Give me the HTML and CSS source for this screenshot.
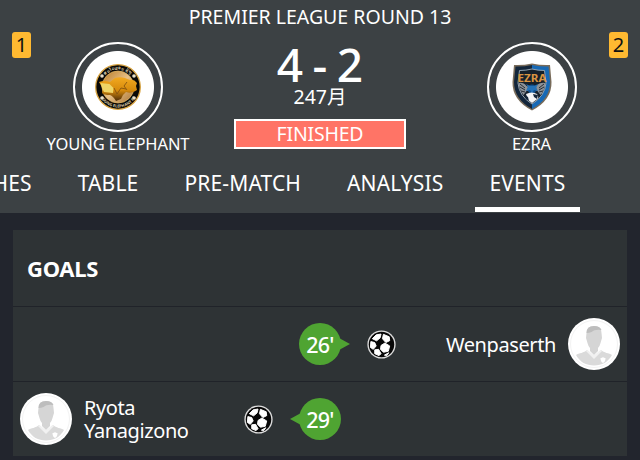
FILE: index.html
```html
<!DOCTYPE html>
<html lang="en">
<head>
    <meta charset="UTF-8">
    <meta name="viewport" content="width=device-width, initial-scale=1.0">
    <title>Young Elephant - Ezra</title>
    <link rel="stylesheet" href="styles.css">
</head>
<body>
    <svg width="0" height="0" class="defs">
        <symbol id="ball" viewBox="0 0 30 30">
            <circle cx="15" cy="15" r="14.6" fill="#dedede"/>
            <circle cx="15" cy="15" r="13.2" fill="#080808"/>
            <path d="M5.500 9l4-4 5-.8-1 4-3.500 3zM17 4.500l6 2.500.5 4-4 2-3.500-4zM4 12l4 1 1.500 3.500-3 3.500L3.500 18zM14.500 16l4-2.500 5 3-1.500 5.500-5 1-3-3zM8 20.500l4-.5 2.500 4.500-2 2-4.500-2zM18 26l4.500-2.500-2 3z" fill="#fff" stroke="#fff" stroke-width="1" stroke-linejoin="round"/>
        </symbol>
        <symbol id="person" viewBox="0 0 52 52">
            <circle cx="26" cy="26" r="26" fill="#fff"/>
            <circle cx="26" cy="26" r="23.500" fill="none" stroke="#f3f3f3"/>
            <path d="M8 37c3-2 8-2 11-5l7 6 7-6c3 3 8 3 11 5-4 7-10 10.500-18 10.500S12 44 8 37z" fill="#dadada"/>
            <path d="M18.500 15q0-7 7.500-7t7.500 7l.5 5-1.500 5q-1 4-2.500 5v3l-4 4-4-4v-3q-1.500-1-2.500-5L18 20z" fill="#d5d5d5"/>
            <path d="M18.500 15q0-7 7.500-7 6 0 7.500 4-7-1-10 2-2 1-5 1z" fill="#bdbdbd"/>
            <path d="M19.500 32l6.500 5.500 6.500-5.500 1.500 1-8 8-8-8z" fill="#f1f1f1"/>
            <path d="M32.500 40q2 0 2.500-1 .5 1 2.500 1 0 4-2.500 5-2.500-1-2.500-5z" fill="#fff"/>
        </symbol>
    </svg>

    <header class="match">
        <div class="league">PREMIER LEAGUE ROUND 13</div>
        <div class="scoreboard">
            <span class="rank">1</span>
            <div class="team">
                <div class="crest">
                    <svg width="48" height="48" viewBox="0 0 48 48">
                        <defs>
                            <linearGradient id="gold" x1="0" y1="0" x2="1" y2="1">
                                <stop offset="0" stop-color="#b77924"/>
                                <stop offset=".5" stop-color="#e8c187"/>
                                <stop offset="1" stop-color="#a97334"/>
                            </linearGradient>
                            <linearGradient id="head" x1="0" y1="0" x2="0" y2="1">
                                <stop offset="0" stop-color="#f2a91f"/>
                                <stop offset=".55" stop-color="#d68a0c"/>
                                <stop offset="1" stop-color="#4d2d08"/>
                            </linearGradient>
                            <path id="arcTop" d="M6.500 24a17.500 17.500 0 0 1 35 0"/>
                            <path id="arcBottom" d="M3.500 24a20.500 20.500 0 0 0 41 0"/>
                        </defs>
                        <circle cx="24" cy="24" r="22.300" fill="#090806" stroke="#d9a441" stroke-width="1.300"/>
                        <circle cx="24" cy="24" r="16" fill="url(#gold)" stroke="#e3b865" stroke-width=".7"/>
                        <text class="crest-text"><textPath href="#arcTop" startOffset="50%">ສະໂມສອນ ຊ້າງ</textPath></text>
                        <text class="crest-text"><textPath href="#arcBottom" startOffset="50%">YOUNG ELEPHANT FC</textPath></text>
                        <path d="M5 19q6-2 11 0l5-4q5-1.500 10 0l5 2q4-1 7 3l-1 3 1 4q-5 4-11 2-3 2-5 7l-5 2q-3-5-6-6-6 0-8-2l1-4z" fill="url(#head)"/>
                        <path d="M6.500 20l9 1 4 4-.5 5-9-1-2-4z" fill="#efd566"/>
                        <path d="M20 25l3 6 4-6 5 1M33 19l-3 4 3 4" fill="none" stroke="#855310" stroke-width=".9"/>
                        <g fill="#e9dfc9"><circle cx="8" cy="13" r="1.800"/><circle cx="40" cy="13" r="1.800"/><circle cx="8" cy="35" r="1.800"/><circle cx="40" cy="35" r="1.800"/></g>
                    </svg>
                </div>
                <div class="team-name">YOUNG ELEPHANT</div>
            </div>
            <div class="result">
                <div class="score">4 - 2</div>
                <div class="date">247月</div>
                <div class="status">FINISHED</div>
            </div>
            <div class="team">
                <div class="crest">
                    <svg width="42" height="48" viewBox="0 0 42 48">
                        <path d="M21 .5q9 2 18 1.500l1.500 17q.5 18-19.500 28.500Q1 37 1.500 19L3 2q9 .5 18-1.500z" fill="#786b5a"/>
                        <path d="M21 2q8 1.700 16.500 1.500L39 19q0 17-18 27z" fill="#1769b5"/>
                        <path d="M21 2q-8 1.700-16.500 1.500L3 19q0 17 18 27z" fill="#13263b"/>
                        <path d="M21 6q6 1.500 12.500 1.500L35 20q-1 13-14 21Q8 33 7 20L8.500 7.500Q15 7.500 21 6z" fill="#16202b" stroke="#93a2af"/>
                        <path d="M7.500 20q5-1 8 3l5 2 5-2q3-4 9-3-1 8-5 12l-3-4-5-2-6 2-3 4q-4-5-5-12z" fill="#8d9298"/>
                        <path d="M9 21l5 4M9 24l5 3M10 28l4 1M33 21l-5 4M33 24l-5 3M32 28l-4 1" stroke="#272d34"/>
                        <circle cx="21" cy="26" r="4.500" fill="#12518e"/>
                        <path d="M15 21l4 2h4l4-2-2 4 2 3-4-1-2 3-2-3-4 1 2-4z" fill="#2472b8"/>
                        <path d="M15 31q6-3 11 0 3 4-1 6l-4 3-4-3-1-3z" fill="#f5f6f7"/>
                        <path d="M22 31l5 1-1 4-3-2zM14 32l3 2 1 4-3-2z" fill="#14263a"/>
                        <text x="21" y="18.500" class="crest-name" textLength="29" lengthAdjust="spacingAndGlyphs">EZRA</text>
                    </svg>
                </div>
                <div class="team-name">EZRA</div>
            </div>
            <span class="rank">2</span>
        </div>
        <nav class="tabs">
            <a class="tab">MATCHES</a>
            <a class="tab">TABLE</a>
            <a class="tab">PRE-MATCH</a>
            <a class="tab">ANALYSIS</a>
            <a class="tab active">EVENTS</a>
        </nav>
    </header>

    <main class="card">
        <h2>GOALS</h2>
        <div class="event">
            <div class="side"></div>
            <div class="minute right">26'</div>
            <div class="side away">
                <svg class="ball"><use href="#ball"/></svg>
                <span class="player">Wenpaserth</span>
                <svg class="avatar"><use href="#person"/></svg>
            </div>
        </div>
        <div class="event">
            <div class="side home">
                <svg class="avatar"><use href="#person"/></svg>
                <span class="player">Ryota<br>Yanagizono</span>
                <svg class="ball"><use href="#ball"/></svg>
            </div>
            <div class="minute left">29'</div>
            <div class="side"></div>
        </div>
    </main>
</body>
</html>
```
FILE: styles.css
```css
* {
    box-sizing: border-box;
}
body {
    margin: 0;
    height: 460px;
    overflow: hidden;
    background: #22252d;
    color: #fff;
    font-family: "Noto Sans", "Noto Sans CJK JP", sans-serif;
}
.defs {
    position: absolute;
}
.match {
    height: 213px;
    overflow: hidden;
    background: #3c4144;
}
.league {
    height: 32px;
    padding-top: 4px;
    text-align: center;
    font-size: 19.5px;
    line-height: 26px;
}
.scoreboard {
    display: flex;
    height: 127px;
    padding: 0 12px;
}
.rank {
    width: 19px;
    height: 26px;
    border-radius: 3px;
    background: #ffb931;
    color: #111;
    font-size: 20px;
    line-height: 26px;
    text-align: center;
}
.team {
    width: 174px;
    padding-top: 10px;
}
.result + .team {
    width: 155px;
}
.crest {
    display: flex;
    align-items: center;
    justify-content: center;
    width: 90px;
    height: 90px;
    margin: 0 auto;
    border: 2px solid #fff;
    border-radius: 50%;
    background: radial-gradient(circle, #fff 35.5px, #3c4144 36.5px);
}
.crest-text {
    fill: #d8c9a6;
    font-size: 4px;
    font-weight: bold;
    text-anchor: middle;
}
.crest-name {
    fill: #d99442;
    font-size: 11px;
    font-weight: bold;
    text-anchor: middle;
}
.team-name {
    font-size: 16.5px;
    letter-spacing: -0.1px;
    line-height: 23px;
    text-align: center;
    white-space: nowrap;
}
.result {
    width: 172px;
    margin: 0 auto 0 29px;
    padding-top: 8px;
    text-align: center;
}
.score {
    font-size: 46px;
    font-weight: 500;
    line-height: 49px;
    word-spacing: -2.5px;
}
.date {
    height: 30px;
    font-size: 19.5px;
    line-height: 16px;
}
.status {
    height: 30px;
    border: 2px solid #fff;
    background: #ff7466;
    font-size: 19.5px;
    letter-spacing: -0.2px;
    line-height: 26px;
}
.tabs {
    display: flex;
    justify-content: flex-end;
    gap: 17px;
    padding-right: 60px;
}
.tab {
    flex: none;
    height: 53px;
    padding: 0 14.5px;
    border-bottom: 5px solid transparent;
    font-size: 21px;
    letter-spacing: 0.15px;
    line-height: 48px;
}
.tab.active {
    border-color: #fff;
}
.card {
    width: 614px;
    margin: 17px auto 0;
    background: #2e3335;

    h2 {
        height: 76px;
        margin: 0;
        padding-left: 14px;
        font-size: 22px;
        letter-spacing: -0.3px;
        line-height: 77px;
    }
}
.event {
    display: grid;
    grid-template-columns: 1fr 42px 1fr;
    align-items: center;
    height: 75px;
    border-top: 1px solid #202329;
}
.side {
    display: flex;
    align-items: center;
}
.home {
    padding-left: 7px;
}
.home .ball {
    margin: 0 26px 0 auto;
}
.away {
    padding-right: 7px;
}
.away .ball {
    margin: 0 auto 0 26px;
}
.player {
    margin: 0 12px;
    font-size: 20px;
    letter-spacing: -0.4px;
    line-height: 23px;
}
.ball {
    width: 29px;
    height: 29px;
}
.avatar {
    width: 52px;
    height: 52px;
}
.minute {
    position: relative;
    width: 42px;
    height: 42px;
    border-radius: 50%;
    background: #4fa432;
    font-size: 21.5px;
    font-weight: 500;
    letter-spacing: -0.8px;
    line-height: 43px;
    text-align: center;
}
.minute::after {
    content: "";
    position: absolute;
    top: 15px;
    border: solid transparent;
    border-width: 6px 11px;
}
.right::after {
    left: 40px;
    border-left-color: #4fa432;
    border-right: 0;
}
.left::after {
    right: 40px;
    border-right-color: #4fa432;
    border-left: 0;
}
```
